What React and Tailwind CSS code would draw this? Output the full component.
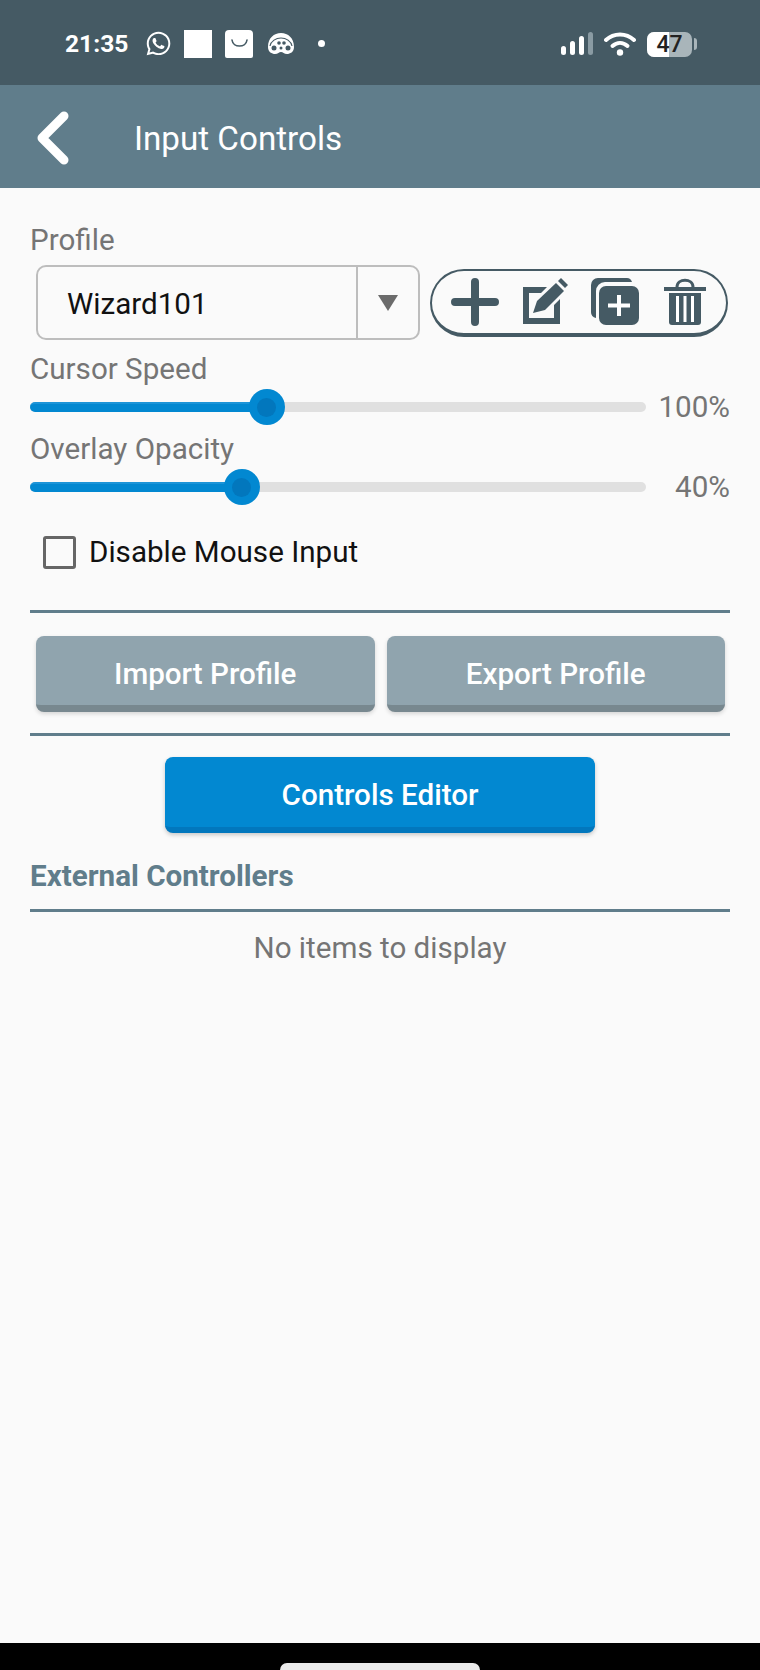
import React from "react";
import { FaWhatsapp } from "react-icons/fa";

function Slider({ label, value, percent }) {
  return (
    <>
      <div className="h-[36px] mt-[4px] text-[29.6px] leading-[36px] text-[#757575]">{label}</div>
      <div className="flex items-center h-[40px]">
        <div className="relative w-[616px] h-[10px] rounded-full bg-[#e0e0e0]">
          <div className="h-full rounded-full bg-[#0288d1] border-t-2 border-[#1c94d8]" style={{ width: percent }} />
          <div
            className="absolute top-[-13px] w-[36px] h-[36px] -ml-[18px] rounded-full bg-[#0288d1] flex items-center justify-center"
            style={{ left: percent }}
          >
            <div className="w-[19px] h-[19px] rounded-full bg-[#0277bd]" />
          </div>
        </div>
        <div className="flex-1 text-right text-[29.6px] text-[#757575]">{value}</div>
      </div>
    </>
  );
}

function GreyButton({ children }) {
  return (
    <button className="flex-1 h-[76px] pt-[8px] rounded-[8px] bg-[#90a4ae] border-b-[7px] border-[#78888f] shadow-[0_2px_4px_rgba(0,0,0,0.15)] text-white text-[29.6px] font-medium">
      {children}
    </button>
  );
}

function StatusBar() {
  return (
    <div className="h-[85px] pt-[3px] bg-[#455a64] flex items-center justify-between pl-[65px] pr-[63px] text-white">
      <div className="flex items-center">
        <span className="text-[24.6px] font-bold w-[80px]">21:35</span>
        <FaWhatsapp className="w-[27px] h-[27px]" />
        <div className="w-[28px] h-[28px] ml-[12px] bg-white" />
        <svg width="28" height="28" viewBox="0 0 28 28" className="ml-[13px]">
          <path d="M0 4a4 4 0 0 1 4-4h20a4 4 0 0 1 4 4v22a2 2 0 0 1-2 2H2a2 2 0 0 1-2-2z" fill="#fff" />
          <path d="M7 10c1 8 14 8 15 0" fill="none" stroke="#455a64" strokeWidth="1.6" strokeLinecap="round" />
        </svg>
        <svg width="28" height="24" viewBox="0 0 28 24" className="ml-[14px]">
          <path d="M1 15C1 6 7 1 14 1s13 5 13 14c0 5-4 7-7 7-3 0-4-2-6-2s-3 2-6 2c-3 0-7-2-7-7z" fill="#fff" />
          <path d="M3 14c1-5 6-8 11-8s10 3 11 8" fill="none" stroke="#455a64" strokeWidth="1.2" />
          <circle cx="7" cy="16" r="2.5" fill="#455a64" />
          <circle cx="21" cy="16" r="2.5" fill="#455a64" />
          <circle cx="12" cy="11" r="1.8" fill="#455a64" />
          <circle cx="17" cy="11" r="1.8" fill="#455a64" />
          <circle cx="14" cy="16" r="1.5" fill="#455a64" />
        </svg>
        <div className="w-[7px] h-[7px] ml-[23px] rounded-full bg-white" />
      </div>
      <div className="flex items-center">
        <svg width="32" height="24" viewBox="0 0 32 24">
          <rect x="0" y="14" width="5" height="9" rx="2.5" fill="#fff" />
          <rect x="9" y="9" width="5" height="14" rx="2.5" fill="#fff" />
          <rect x="18" y="4" width="5" height="19" rx="2.5" fill="#fff" />
          <rect x="27" y="0" width="5" height="23" rx="2.5" fill="#8a9ba3" />
        </svg>
        <svg width="32" height="24" viewBox="0 0 32 24" className="ml-[11px]">
          <path d="M2 8c8-7.500 20-7.500 28 0" fill="none" stroke="#fff" strokeWidth="4" strokeLinecap="round" />
          <path d="M8.500 14c4.500-4 10.500-4 15 0" fill="none" stroke="#fff" strokeWidth="4" strokeLinecap="round" />
          <circle cx="16" cy="20.500" r="3.200" fill="#fff" />
        </svg>
        <div className="relative w-[45px] h-[25px] ml-[11px] rounded-[7px] bg-[#a9b5ba] flex items-center justify-center">
          <div className="absolute inset-y-0 left-0 w-[22px] rounded-l-[7px] bg-white" />
          <span className="relative text-[23px] leading-none font-medium text-[#222]">47</span>
        </div>
        <div className="w-[3px] h-[12px] ml-[2px] rounded-r-full bg-[#a9b5ba]" />
      </div>
    </div>
  );
}

export default function App() {
  return (
    <div className="w-[760px] h-[1670px] flex flex-col bg-[#fafafa] font-['Roboto',sans-serif]">
      <StatusBar />

      <div className="h-[103px] bg-[#607d8b] flex items-center text-white">
        <svg width="36" height="54" viewBox="0 0 36 54" className="ml-[35px] mt-[2px]">
          <path d="M29 5L7 27l22 22" fill="none" stroke="#fff" strokeWidth="9" strokeLinecap="round" strokeLinejoin="round" />
        </svg>
        <span className="ml-[63px] pt-[5px] text-[33.200px]">Input Controls</span>
      </div>

      <div className="flex-1 px-[30px] pt-[34px]">
        <div className="h-[36px] text-[29.6px] leading-[36px] text-[#757575]">Profile</div>

        <div className="flex items-center mt-[7px] pl-[6px] h-[75px]">
          <div className="flex w-[384px] h-full rounded-[10px] border-2 border-[#bdbdbd]">
            <div className="flex-1 flex items-center pl-[29px] pt-[3px] text-[29.6px] text-[#111]">Wizard101</div>
            <div className="w-[62px] border-l-2 border-[#bdbdbd] flex items-center justify-center">
              <svg width="20" height="16" viewBox="0 0 20 16">
                <path d="M0 0h20L10 16z" fill="#6b6b6b" />
              </svg>
            </div>
          </div>
          <div className="flex items-center gap-[22px] ml-[10px] w-[298px] h-[68px] pl-[19px] rounded-full border-2 border-b-4 border-[#455a64]">
            <svg width="48" height="48" viewBox="0 0 48 48">
              <path d="M24 4v40M4 24h40" stroke="#455a64" strokeWidth="8" strokeLinecap="round" />
            </svg>
            <svg width="48" height="48" viewBox="0 0 48 48">
              <path d="M2 9h24l-6 6H8v25h25V27l6-6v25H2z" fill="#455a64" />
              <path d="M12 35l4-12L35 5l8 8-19 19z" fill="#455a64" />
              <path d="M37 3l3-3 7 7-3 3z" fill="#455a64" />
            </svg>
            <svg width="48" height="48" viewBox="0 0 48 48">
              <path d="M0 7a7 7 0 0 1 7-7h28a6 6 0 0 1 6 4H14a9 9 0 0 0-9 9v27a6 6 0 0 1-5-6z" fill="#455a64" />
              <rect x="8" y="8" width="40" height="39" rx="7" fill="#455a64" />
              <path d="M28 17v21M17 27.500h22" stroke="#fff" strokeWidth="4" />
            </svg>
            <svg width="48" height="48" viewBox="0 0 48 48">
              <path d="M3 9h42v4H3z" fill="#455a64" />
              <path d="M16 9c0-9 16-9 16 0" fill="none" stroke="#455a64" strokeWidth="3" />
              <path d="M8 15h32v29a3 3 0 0 1-3 3H11a3 3 0 0 1-3-3z" fill="#455a64" />
              <path d="M16.500 18v26M24 18v26M31.500 18v26" stroke="#fff" strokeWidth="3" />
            </svg>
          </div>
        </div>

        <div className="mt-[11px]">
          <Slider label="Cursor Speed" value="100%" percent="38.400%" />
          <Slider label="Overlay Opacity" value="40%" percent="34.400%" />
        </div>

        <label className="flex items-center h-[50px] mt-[20px] pl-[13px]">
          <span className="w-[33px] h-[33px] rounded-[3px] border-[3px] border-[#666]" />
          <span className="ml-[13px] text-[29.6px] text-[#111]">Disable Mouse Input</span>
        </label>

        <div className="h-[3px] mt-[33px] bg-[#607d8b]" />

        <div className="flex gap-[12px] mt-[23px] pl-[6px] pr-[5px]">
          <GreyButton>Import Profile</GreyButton>
          <GreyButton>Export Profile</GreyButton>
        </div>

        <div className="h-[3px] mt-[21px] bg-[#607d8b]" />

        <div className="flex justify-center mt-[21px]">
          <button className="w-[430px] h-[76px] pt-[7px] rounded-[8px] bg-[#0288d1] border-b-[6px] border-[#0277bd] shadow-[0_2px_4px_rgba(0,0,0,0.2)] text-white text-[29.6px] font-medium">
            Controls Editor
          </button>
        </div>

        <div className="mt-[25px] text-[29.6px] leading-[36px] font-bold text-[#607d8b]">External Controllers</div>
        <div className="h-[3px] mt-[15px] bg-[#607d8b]" />
        <div className="mt-[18px] text-center text-[29.6px] leading-[36px] text-[#757575]">No items to display</div>
      </div>

      <div className="h-[27px] bg-black flex items-end justify-center">
        <div className="w-[200px] h-[7px] rounded-t-full bg-[#ebebeb]" />
      </div>
    </div>
  );
}
